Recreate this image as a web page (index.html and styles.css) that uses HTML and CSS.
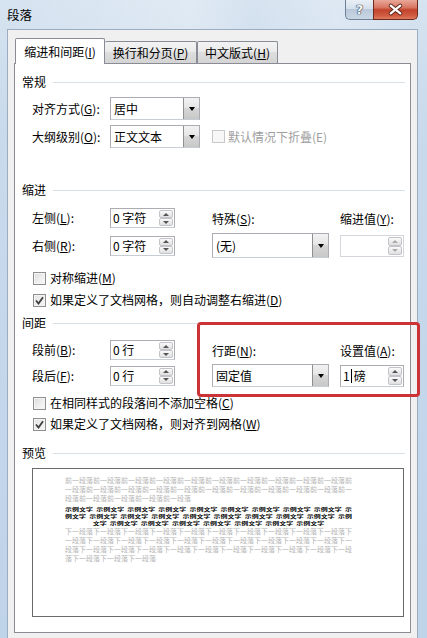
FILE: index.html
```html
<!DOCTYPE html>
<html lang="zh-CN">
<head>
<meta charset="utf-8">
<title>段落</title>
<link rel="stylesheet" href="styles.css">
</head>
<body>
<div class="window">
  <div class="titlebar">
    <span class="title">段落</span>
    <div class="caption-btns">
      <div class="btn-help">?</div>
      <div class="btn-close">
        <svg width="45" height="19" viewBox="0 0 45 19">
          <path d="M17.5 5.5 L27.5 13.5 M27.5 5.5 L17.5 13.5" stroke="#5b2418" stroke-width="4.2" stroke-linecap="round" fill="none"/>
          <path d="M17.5 5.5 L27.5 13.5 M27.5 5.5 L17.5 13.5" stroke="#ffffff" stroke-width="2.4" stroke-linecap="round" fill="none"/>
        </svg>
      </div>
    </div>
  </div>
  <div class="client">
    <div class="tabs">
      <div class="tab tab1 active">缩进和间距(<u>I</u>)</div>
      <div class="tab tab2">换行和分页(<u>P</u>)</div>
      <div class="tab tab3">中文版式(<u>H</u>)</div>
    </div>
    <div class="panel">
      <div class="legend lg-general"><span>常规</span><i class="legend-line"></i></div>
      <div class="row row-align">
        <span class="lbl">对齐方式(<u>G</u>):</span>
        <div class="combo combo-s"><span class="val">居中</span><span class="dd"><b class="tri"></b></span></div>
      </div>
      <div class="row row-outline">
        <span class="lbl">大纲级别(<u>O</u>):</span>
        <div class="combo combo-s"><span class="val">正文文本</span><span class="dd"><b class="tri"></b></span></div>
        <div class="check disabled check-collapse"><span class="box"></span><span>默认情况下折叠(E)</span></div>
      </div>

      <div class="legend lg-indent"><span>缩进</span><i class="legend-line"></i></div>
      <div class="row row-left">
        <span class="lbl">左侧(<u>L</u>):</span>
        <div class="spin"><span class="val">0 字符</span><span class="arrows"><span><b class="up"></b></span><span><b class="down"></b></span></span></div>
        <span class="lbl-mid">特殊(<u>S</u>):</span>
        <span class="lbl-right">缩进值(<u>Y</u>):</span>
      </div>
      <div class="row row-right">
        <span class="lbl">右侧(<u>R</u>):</span>
        <div class="spin"><span class="val">0 字符</span><span class="arrows"><span><b class="up"></b></span><span><b class="down"></b></span></span></div>
        <div class="combo combo-m combo-tall"><span class="val">(无)</span><span class="dd"><b class="tri"></b></span></div>
        <div class="spin spin-r spin-dis"><span class="val"></span><span class="arrows"><span><b class="up"></b></span><span><b class="down"></b></span></span></div>
      </div>
      <div class="check check-sym"><span class="box"></span><span>对称缩进(<u>M</u>)</span></div>
      <div class="check check-grid1"><span class="box checked"><svg width="11" height="11" viewBox="0 0 11 11"><path d="M2 5.5 L4.5 8.5 L9 2.2" stroke="#3c3c3c" stroke-width="1.7" fill="none"/></svg></span><span>如果定义了文档网格，则自动调整右缩进(<u>D</u>)</span></div>

      <div class="legend lg-spacing"><span>间距</span><i class="legend-line"></i></div>
      <div class="row row-before">
        <span class="lbl">段前(<u>B</u>):</span>
        <div class="spin"><span class="val">0 行</span><span class="arrows"><span><b class="up"></b></span><span><b class="down"></b></span></span></div>
        <span class="lbl-mid">行距(<u>N</u>):</span>
        <span class="lbl-right">设置值(<u>A</u>):</span>
      </div>
      <div class="row row-after">
        <span class="lbl">段后(<u>F</u>):</span>
        <div class="spin"><span class="val">0 行</span><span class="arrows"><span><b class="up"></b></span><span><b class="down"></b></span></span></div>
        <div class="combo combo-m"><span class="val">固定值</span><span class="dd"><b class="tri"></b></span></div>
        <div class="spin spin-r"><span class="val">1<i class="caret"></i>磅</span><span class="arrows"><span><b class="up"></b></span><span><b class="down"></b></span></span></div>
      </div>
      <div class="check check-nospace"><span class="box"></span><span>在相同样式的段落间不添加空格(<u>C</u>)</span></div>
      <div class="check check-grid2"><span class="box checked"><svg width="11" height="11" viewBox="0 0 11 11"><path d="M2 5.5 L4.5 8.5 L9 2.2" stroke="#3c3c3c" stroke-width="1.7" fill="none"/></svg></span><span>如果定义了文档网格，则对齐到网格(<u>W</u>)</span></div>

      <div class="legend lg-preview"><span>预览</span><i class="legend-line"></i></div>
      <div class="preview">
        <div class="pv-gray">前一段落前一段落前一段落前一段落前一段落前一段落前一段落前一段落前一段落前一段落前</div>
        <div class="pv-gray">一段落前一段落前一段落前一段落前一段落前一段落前一段落前一段落前一段落前一段落前一</div>
        <div class="pv-gray">段落前一段落前一段落前一段落前一段落</div>
        <div class="pv-sample">
          <div>示例文字 示例文字 示例文字 示例文字 示例文字 示例文字 示例文字 示例文字 示例文字 示</div>
          <div>例文字 示例文字 示例文字 示例文字 示例文字 示例文字 示例文字 示例文字 示例文字 示例</div>
          <div>文字 示例文字 示例文字 示例文字 示例文字 示例文字 示例文字 示例文字</div>
        </div>
        <div class="pv-next">
          <div class="pv-gray">下一段落下一段落下一段落下一段落下一段落下一段落下一段落下一段落下一段落下一段落下</div>
          <div class="pv-gray">一段落下一段落下一段落下一段落下一段落下一段落下一段落下一段落下一段落下一段落下一</div>
          <div class="pv-gray">段落下一段落下一段落下一段落下一段落下一段落下一段落下一段落下一段落下一段落下一段</div>
          <div class="pv-gray">落下一段落下一段落下一段落</div>
        </div>
      </div>

      <div class="highlight"></div>
    </div>
  </div>
</div>
</body>
</html>
```

FILE: styles.css
```css
* { box-sizing: border-box; }
html, body { margin: 0; padding: 0; }
body {
  width: 427px;
  height: 638px;
  overflow: hidden;
  font-family: "Noto Sans CJK SC", "Noto Sans", sans-serif;
  font-size: 12px;
  color: #000;
  background: #c4d6ea;
}
u { text-decoration: underline; text-underline-offset: 1px; }

.window {
  width: 427px;
  height: 638px;
  display: flex;
  flex-direction: column;
  padding: 0 9px 0 7px;
  background: linear-gradient(180deg, #d6e3f0 0%, #c9daec 20%, #bfd3e9 100%);
}

.titlebar {
  height: 29px;
  flex: none;
  display: flex;
  align-items: flex-start;
  background: linear-gradient(90deg, rgba(255,255,255,0) 0%, rgba(255,255,255,0.25) 45%, rgba(255,255,255,0) 60%, rgba(255,255,255,0.2) 80%, rgba(255,255,255,0) 100%);
}
.title {
  margin-top: 7px;
  font-size: 12.5px;
  line-height: 16px;
  color: #000;
}
.caption-btns { margin-left: auto; display: flex; }
.btn-help {
  width: 28px;
  height: 20px;
  border: 1px solid #6f8199;
  border-top: none;
  border-right: none;
  border-radius: 0 0 0 5px;
  background: linear-gradient(180deg, #e9eff6 0%, #d6e0eb 45%, #b9c8da 50%, #c9d6e4 100%);
  color: #f6f8fb;
  font-family: "DejaVu Sans", sans-serif;
  font-weight: bold;
  font-size: 13px;
  line-height: 19px;
  text-align: center;
  text-shadow: 0 0 1px #2a3646, 0 0 1px #2a3646, 0 0 1px #2a3646;
}
.btn-close {
  width: 45px;
  height: 20px;
  border: 1px solid #6d2a1f;
  border-top: none;
  border-radius: 0 0 5px 0;
  background: linear-gradient(180deg, #e9a898 0%, #d77662 40%, #c2432b 52%, #cf5a40 80%, #de7a5c 100%);
  display: flex;
}

.client {
  flex: 1;
  background: #f0f0f0;
  border: 1px solid #9cadc2;
  border-bottom: none;
  padding: 8px 6px 0 6px;
}

.tabs {
  height: 25px;
  display: flex;
  align-items: flex-end;
  padding-left: 1px;
  position: relative;
  z-index: 2;
}
.tab {
  height: 22px;
  border: 1px solid #898c95;
  border-bottom: none;
  border-radius: 2px 2px 0 0;
  background: linear-gradient(180deg, #f3f3f3 0%, #ebebeb 45%, #dedede 50%, #d4d4d4 100%);
  display: flex;
  align-items: center;
  justify-content: center;
  line-height: 16px;
}
.tab1 { width: 90px; }
.tab2 { width: 92px; border-left: none; }
.tab3 { width: 81px; margin-left: 0; }
.tab.active {
  height: 26px;
  margin-bottom: -1px;
  background: #fff;
  padding-top: 1px;
}

.panel {
  position: relative;
  height: 570px;
  border: 1px solid #898c95;
  background: #fff;
  padding: 0 5px 0 7px;
}

.legend {
  height: 16px;
  display: flex;
  align-items: center;
  line-height: 16px;
}
.legend-line {
  flex: 1;
  height: 1px;
  margin-left: 7px;
  background: #d5dfe5;
}
.lg-general { margin-top: 10px; }
.lg-indent { margin-top: 34px; }
.lg-spacing { margin-top: 7px; }
.lg-preview { margin-top: 13px; }

.row {
  display: flex;
  align-items: center;
  padding-left: 10px;
}
.lbl { width: 78px; flex: none; line-height: 16px; }
.lbl-mid { width: 128px; margin-left: 37px; flex: none; }
.lbl-right { flex: none; }

.row-align { height: 23px; margin-top: 7px; }
.row-outline { height: 23px; margin-top: 5px; }
.row-left { height: 20px; margin-top: 10px; }
.row-right { height: 25px; margin-top: 5px; }
.row-before { height: 20px; margin-top: 9px; }
.row-after { height: 23px; margin-top: 4px; }

.combo {
  height: 23px;
  border: 1px solid #abadb3;
  border-bottom-color: #c8ccd3;
  background: #fff;
  display: flex;
  align-items: stretch;
  flex: none;
}
.combo .val { flex: 1; padding-left: 3px; line-height: 21px; white-space: nowrap; }
.combo .dd {
  width: 16px;
  margin: 0;
  border-left: 1px solid #8e8f8f;
  background: linear-gradient(180deg, #f2f2f2 0%, #e6e6e6 45%, #d6d6d6 50%, #c8c8c8 100%);
  display: flex;
  align-items: center;
  justify-content: center;
}
.tri {
  width: 0; height: 0;
  border-left: 3.5px solid transparent;
  border-right: 3.5px solid transparent;
  border-top: 4px solid #000;
}
.combo-s { width: 90px; }
.combo-m { width: 117px; margin-left: 37px; }
.combo-tall { height: 25px; }
.combo-tall .val { line-height: 23px; }

.spin {
  width: 65px;
  height: 20px;
  border: 1px solid #abadb3;
  border-bottom-color: #c8ccd3;
  background: #fff;
  display: flex;
  align-items: stretch;
  flex: none;
  padding-left: 2px;
}
.spin .val { flex: 1; line-height: 18px; white-space: nowrap; display: flex; align-items: center; }
.spin .arrows {
  width: 15px;
  display: flex;
  flex-direction: column;
  padding: 1px 1px 1px 0;
}
.spin .arrows span {
  flex: 1;
  border: 1px solid #c2c4c9;
  border-radius: 2px;
  background: linear-gradient(180deg, #fbfbfb 0%, #ececec 50%, #e0e0e0 100%);
  display: flex;
  align-items: center;
  justify-content: center;
}
.up, .down {
  width: 0; height: 0;
  border-left: 3px solid transparent;
  border-right: 3px solid transparent;
}
.up { border-bottom: 3px solid #555; }
.down { border-top: 3px solid #555; }
.spin-r { width: 64px; height: 22px; margin-left: 11px; }
.spin-dis { border-color: #d4d6db; }
.spin-dis .up { border-bottom-color: #aaa; }
.spin-dis .down { border-top-color: #aaa; }
.caret { display: inline-block; width: 1px; height: 14px; background: #000; margin: 0 2px 0 1px; }

.check {
  display: flex;
  align-items: center;
  height: 16px;
  padding-left: 11px;
  line-height: 16px;
}
.box {
  width: 13px;
  height: 13px;
  flex: none;
  margin-right: 4px;
  border: 1px solid #8e8f8f;
  background: linear-gradient(135deg, #d9d9d9 0%, #ededed 50%, #fbfbfb 100%);
  box-shadow: inset 0 0 0 1px #f4f4f4;
  display: flex;
  align-items: center;
  justify-content: center;
}
.box.checked { background: linear-gradient(135deg, #e4e4e4 0%, #f6f6f6 100%); }
.check.disabled { color: #a0a0a0; padding-left: 0; margin-left: 12px; }
.check.disabled .box { border-color: #c8c8c8; background: #f7f7f7; box-shadow: none; margin-right: 3px; }
.check-sym { margin-top: 12px; }
.check-grid1 { margin-top: 6px; }
.check-nospace { margin-top: 8px; }
.check-grid2 { margin-top: 5px; }

.preview {
  margin-top: 7px;
  margin-left: 10px;
  width: 372px;
  height: 149px;
  border: 1px solid #6a6a6a;
  padding: 7px 0 0 32px;
  font-size: 7px;
}
.pv-gray {
  color: #b5b5b5;
  line-height: 9px;
  height: 9px;
  white-space: nowrap;
}
.pv-sample {
  width: 287px;
  height: 30px;
  margin-top: 1.5px;
  margin-bottom: -9px;
  color: #000;
  font-weight: 700;
  line-height: 10px;
  text-align: center;
  white-space: nowrap;
  word-spacing: 1.5px;
  transform: scaleY(0.7);
  transform-origin: top left;
}
.pv-sample div { height: 10px; }
.pv-next { margin-top: 1.5px; }

.highlight {
  position: absolute;
  left: 182px;
  top: 258px;
  width: 223px;
  height: 75px;
  border: 3px solid #cc3336;
  border-radius: 4px;
}
```
